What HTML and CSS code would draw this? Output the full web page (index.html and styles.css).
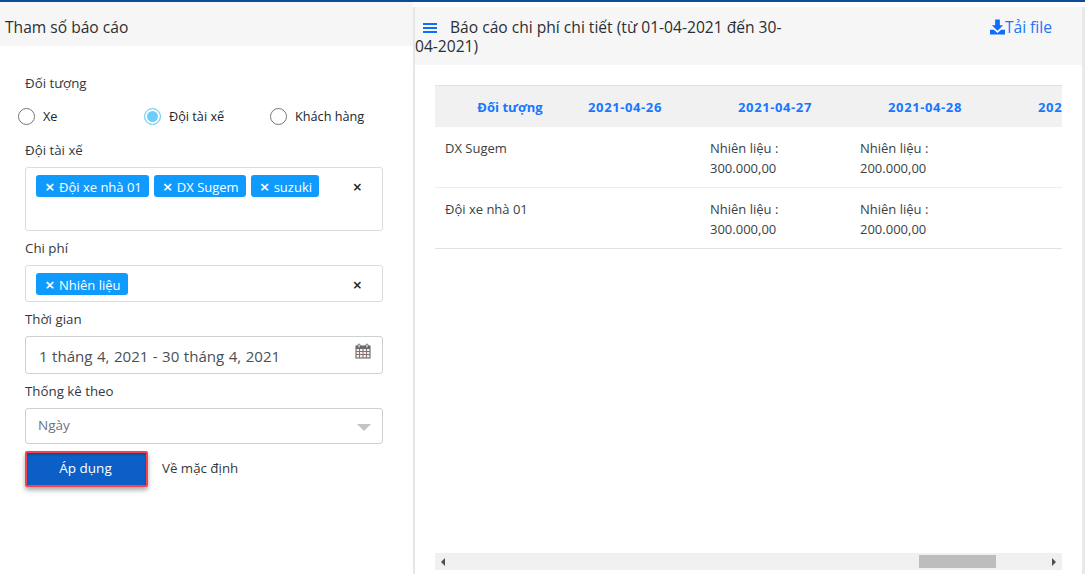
FILE: index.html
```html
<!DOCTYPE html>
<html lang="vi">
<head>
<meta charset="utf-8">
<title>Báo cáo chi phí chi tiết</title>
<link rel="stylesheet" href="styles.css">
</head>
<body>
<div class="topbar"></div>
<div class="main">
  <aside class="left">
    <div class="left-head">Tham số báo cáo</div>
    <form class="form">
      <div class="label label-first">Đối tượng</div>
      <div class="radios">
        <label class="radio"><span class="dot"></span>Xe</label>
        <label class="radio"><span class="dot dot-on"></span>Đội tài xế</label>
        <label class="radio"><span class="dot"></span>Khách hàng</label>
      </div>
      <div class="label label-driver">Đội tài xế</div>
      <div class="box box-tags box-tall">
        <span class="tag"><i class="tag-x">×</i>Đội xe nhà 01</span>
        <span class="tag"><i class="tag-x">×</i>DX Sugem</span>
        <span class="tag"><i class="tag-x">×</i>suzuki</span>
        <span class="clear">×</span>
      </div>
      <div class="label">Chi phí</div>
      <div class="box box-tags">
        <span class="tag"><i class="tag-x">×</i>Nhiên liệu</span>
        <span class="clear">×</span>
      </div>
      <div class="label">Thời gian</div>
      <div class="box box-date">
        <span class="date">1 tháng 4, 2021 - 30 tháng 4, 2021</span>
        <svg class="cal" viewBox="0 0 16 16" width="16" height="16">
          <rect x="1" y="3" width="14" height="12" fill="#f4eeee" stroke="#5a5a5a"/>
          <rect x="1" y="3" width="14" height="3" fill="#6b6b6b"/>
          <path d="M1 8.500H15M1 11.500H15M4.500 6V15M8 6V15M11.500 6V15" stroke="#8a6f6f" fill="none"/>
          <rect x="3" y="1" width="2" height="4" rx="1" fill="#fff" stroke="#555" stroke-width=".8"/>
          <rect x="11" y="1" width="2" height="4" rx="1" fill="#fff" stroke="#555" stroke-width=".8"/>
        </svg>
      </div>
      <div class="label">Thống kê theo</div>
      <div class="box box-select">
        <span class="select-val">Ngày</span>
        <span class="caret"></span>
      </div>
      <div class="actions">
        <button type="button" class="apply">Áp dụng</button>
        <span class="reset">Về mặc định</span>
      </div>
    </form>
  </aside>
  <section class="right">
    <header class="right-head">
      <h1 class="title"><svg class="burger" viewBox="0 0 14 10" width="14" height="10"><path d="M0 1H14M0 5H14M0 9H14" stroke="#0d6efd" stroke-width="2"/></svg>Báo cáo chi phí chi tiết (từ 01-04-2021 đến 30-04-2021)</h1>
      <a class="download"><svg viewBox="0 0 16 16" width="15" height="16"><path d="M5.500 0H10.500V6H14L8 12 2 6H5.500Z" fill="#0d6efd"/><path d="M0 11H4L8 14.500 12 11H16V16H0Z" fill="#0d6efd"/></svg>Tải file</a>
    </header>
    <div class="content">
      <div class="table-wrap">
        <table class="table">
          <thead>
            <tr><th class="col-name">Đối tượng</th><th class="col-date">2021-04-26</th><th class="col-date">2021-04-27</th><th class="col-date">2021-04-28</th><th class="col-date">2021-04-29</th></tr>
          </thead>
          <tbody>
            <tr><td>DX Sugem</td><td></td><td>Nhiên liệu :<br>300.000,00</td><td>Nhiên liệu :<br>200.000,00</td><td></td></tr>
            <tr><td>Đội xe nhà 01</td><td></td><td>Nhiên liệu :<br>300.000,00</td><td>Nhiên liệu :<br>200.000,00</td><td></td></tr>
          </tbody>
        </table>
      </div>
      <div class="scrollbar">
        <span class="arrow arrow-l"></span>
        <span class="track"><span class="thumb"></span></span>
        <span class="arrow arrow-r"></span>
      </div>
    </div>
  </section>
</div>
</body>
</html>
```
FILE: styles.css
```css
* { box-sizing: border-box; }
html, body { margin: 0; height: 574px; overflow: hidden; background: #fff; }
body { font-family: "Open Sans", "Noto Sans", sans-serif; font-size: 13px; color: #212529; display: flex; flex-direction: column; }
.topbar { height: 2px; background: #0f4c96; flex: none; }
.main { flex: 1; display: flex; min-height: 0; }

.left { width: 413px; flex: none; }
.left-head { height: 44px; background: #f6f6f6; padding-left: 5px; font-size: 15.600px; line-height: 51px; color: #2b2f33; }
.form { padding: 0 30px 0 25px; }
.label { font-size: 13.300px; line-height: 18px; height: 18px; margin: 8px 0 8px; color: #33383d; }
.label-first { margin: 28px 0 0; }
.label-driver { margin: -1px 0 8px; }
.radios { display: grid; grid-template-columns: 126px 126px 1fr; margin: 14px 0 16px -7px; height: 20px; }
.radio { display: flex; align-items: center; gap: 8px; font-size: 12.700px; }
.dot { width: 17px; height: 17px; border: 1px solid #767676; border-radius: 50%; background: #fff; flex: none; }
.dot-on { background: #6ccffb; border-color: #6ccffb; box-shadow: inset 0 0 0 2px #fff; }
.box { border: 1px solid #dcdcdc; border-radius: 3px; width: 358px; background: #fff; }
.box-tags { position: relative; display: flex; flex-wrap: wrap; align-content: flex-start; gap: 5px; padding: 7px 40px 0 10px; height: 37px; }
.box-tall { height: 64px; }
.tag { height: 22px; background: #0f9bfd; color: #fff; border-radius: 3px; padding: 0 7px 0 9px; font-size: 13px; line-height: 24px; display: inline-flex; white-space: nowrap; }
.tag-x { font-style: normal; font-weight: 600; width: 14px; font-size: 17px; flex: none; }
.clear { position: absolute; right: 20px; top: 8px; font-size: 16px; line-height: 22px; color: #222; font-weight: 600; }
.box-date { height: 38px; display: flex; justify-content: space-between; padding: 7px 11px 0 13px; border-color: #cfcfcf; }
.date { font-size: 15.100px; line-height: 24px; color: #495057; word-spacing: .5px; }
.cal { margin-top: -1px; }
.box-select { height: 36px; display: flex; align-items: center; justify-content: space-between; padding: 0 11px 2px 12px; border-color: #cfcfcf; }
.select-val { font-size: 13.500px; color: #6c757d; }
.caret { width: 0; height: 0; border-left: 7px solid transparent; border-right: 7px solid transparent; border-top: 7px solid #c4c4c4; margin-top: 5px; }
.actions { display: flex; align-items: center; gap: 14px; margin-top: 7px; }
.apply { width: 123px; height: 36px; background: #0b5fc6; color: #fff; border: 2px solid #f2444c; border-radius: 2px; font: inherit; font-size: 13.500px; box-shadow: 0 3px 5px rgba(0,0,0,.35), inset 0 2px 2px #0a4f9f; padding: 0 2px 3px 0; }
.reset { font-size: 13.300px; color: #33383d; padding-bottom: 2px; }

.right { flex: 1; min-width: 0; margin-top: 5px; border-left: 2px solid #e6e6e6; border-right: 3px solid #e9e9e9; display: flex; flex-direction: column; }
.right-head { height: 58px; background: #f6f6f6; display: flex; justify-content: space-between; flex: none; }
.title { width: 372px; margin: 0; font-size: 15.600px; font-weight: 400; line-height: 19px; padding-top: 11px; color: #2b2f33; }
.burger { margin: 0 13px 0 8px; }
.download { color: #2176f5; font-size: 15.600px; line-height: 19px; padding: 11px 30px 0 0; display: flex; align-items: flex-start; }
.download svg { margin-top: 1px; }
.content { flex: 1; min-height: 0; padding: 20px 20px 4px; display: flex; flex-direction: column; }
.table-wrap { flex: 1; overflow: hidden; min-height: 0; }
.table { border-collapse: collapse; table-layout: fixed; width: 715px; font-size: 13px; }
.table th { height: 41px; width: 150px; background: #f1f1f1; border-top: 1px solid #e0e0e0; color: #1677ff; font-weight: 700; padding: 2px 0 0; text-align: center; }
.table th.col-date { letter-spacing: .6px; }
.table th.col-name { width: 115px; padding-left: 35px; }
.table td { height: 61px; vertical-align: top; padding: 11px 10px 9px; line-height: 20px; border-bottom: 1px solid #eee; color: #3a3f44; }
.table tr:last-child td { border-bottom-color: #e2e2e2; }
.scrollbar { height: 17px; background: #f0f0f0; display: flex; align-items: center; flex: none; }
.arrow { width: 0; height: 0; border-top: 4px solid transparent; border-bottom: 4px solid transparent; flex: none; }
.arrow-l { border-right: 4px solid #505050; margin-left: 6px; }
.arrow-r { border-left: 4px solid #505050; margin-right: 6px; }
.track { flex: 1; height: 13px; display: flex; }
.thumb { width: 77px; background: #bdbdbd; margin-left: 474px; }
```
